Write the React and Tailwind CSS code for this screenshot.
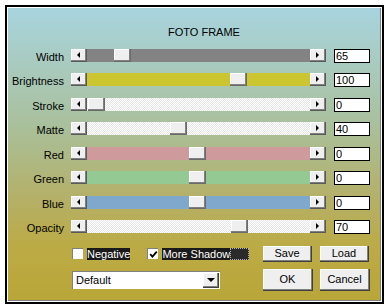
import React from 'react';

const DITHER = 'bg-[repeating-conic-gradient(#ffffff_0_25%,#e6e6e6_0_50%)] bg-[length:2px_2px]';

const rows = [
    { label: 'Width', value: '65', track: 'bg-[#838383]', pos: 27 },
    { label: 'Brightness', value: '100', track: 'bg-[#cbc52f]', pos: 143 },
    { label: 'Stroke', value: '0', track: DITHER, pos: 1 },
    { label: 'Matte', value: '40', track: DITHER, pos: 83 },
    { label: 'Red', value: '0', track: 'bg-[#cf9a9c]', pos: 102 },
    { label: 'Green', value: '0', track: 'bg-[#94c994]', pos: 102 },
    { label: 'Blue', value: '0', track: 'bg-[#80a7cc]', pos: 102 },
    { label: 'Opacity', value: '70', track: DITHER, pos: 144 },
];

const bevel = 'bg-[#efefef] shadow-[inset_-1px_-1px_0_#808080,inset_1px_1px_0_#ffffff]';

const ArrowButton = ({ dir }) => (
    <div className={`w-[16px] h-full flex items-center justify-center border-r border-b border-[#5a5a5a] ${bevel}`}>
        {dir === 'left' ? (
            <div className="w-0 h-0 border-y-[3px] border-y-transparent border-r-[3px] border-r-black" />
        ) : (
            <div className="w-0 h-0 border-y-[3px] border-y-transparent border-l-[3px] border-l-black" />
        )}
    </div>
);

const Slider = ({ track, pos }) => (
    <div className="ml-[7px] w-[255px] h-[13px] flex">
        <ArrowButton dir="left" />
        <div className={`flex-1 flex ${track}`}>
            <div style={{ marginLeft: pos }} className={`w-[17px] h-full border-r border-b border-[#6a6a6a] ${bevel}`} />
        </div>
        <ArrowButton dir="right" />
    </div>
);

const Button = ({ children, className }) => (
    <div className={`flex items-center justify-center border-r border-b border-[#404040] ${bevel} ${className}`}>
        {children}
    </div>
);

const App = () => {
    return (
        <div className="w-[386px] h-[306px] bg-white pt-[5px] pl-[5px] font-['Liberation_Sans',Arial,sans-serif] text-[11px] text-black">
            <div className="w-[379px] h-[299px] border-2 border-black flex">
                <div className="flex-1 flex border border-white">
                    <div className="flex-1 flex flex-col border-r border-b border-[#808080] bg-[linear-gradient(to_bottom,#a8d4df,#a9c09c_40%,#b4b068_65%,#bcab45_82%,#b9a638)] pt-[18px]">
                        <div className="h-[13px] leading-[13px] pl-[160px]">FOTO FRAME</div>

                        <div className="mt-[10px] flex flex-col gap-[10.43px]">
                            {rows.map((r) => (
                                <div key={r.label} className="flex items-start h-[14px]">
                                    <div className="w-[56px] text-right leading-[14px] pt-[1px]">{r.label}</div>
                                    <Slider track={r.track} pos={r.pos} />
                                    <div className="ml-[8px] w-[36px] h-[14px] border border-black bg-white pl-[1px] leading-[12px]">
                                        {r.value}
                                    </div>
                                </div>
                            ))}
                        </div>

                        <div className="mt-[12px] pl-[64px] flex flex-col">
                            <div className="flex items-center h-[16px]">
                                <div className="w-[191px] flex items-center">
                                    <div className="w-[11px] h-[11px] bg-white border-t border-l border-[#808080]" />
                                    <span className="ml-[4px] bg-[#1a1a1a] text-white leading-[12px]">Negative</span>
                                    <div className="ml-[17px] w-[11px] h-[11px] bg-white border-t border-l border-[#808080] flex items-center justify-center">
                                        <svg width="9" height="9" viewBox="0 0 9 9">
                                            <path d="M1.2 4.2 L3.4 6.6 L7.8 1.6" fill="none" stroke="black" strokeWidth="1.8" />
                                        </svg>
                                    </div>
                                    <span className="ml-[4px] bg-[#1a1a1a] text-white leading-[12px]">More Shadow</span>
                                    <span className="w-[19px] h-[12px] bg-[#2a2a2a] border border-dotted border-[#b0b0b0]" />
                                </div>
                                <Button className="w-[49px] h-[16px]">Save</Button>
                                <Button className="ml-[8px] w-[49px] h-[16px]">Load</Button>
                            </div>

                            <div className="mt-[7px] flex items-center h-[22px]">
                                <div className="w-[191px] flex items-center">
                                    <div className="w-[148px] h-[18px] flex bg-white border-t border-l border-[#808080]">
                                        <div className="flex-1 pl-[3px] leading-[16px]">Default</div>
                                        <div className={`w-[16px] h-[15px] mt-[1px] mr-[1px] flex items-center justify-center border-r border-b border-[#404040] ${bevel}`}>
                                            <div className="w-0 h-0 border-x-[4px] border-x-transparent border-t-[4px] border-t-black" />
                                        </div>
                                    </div>
                                </div>
                                <Button className="w-[50px] h-[22px]">OK</Button>
                                <Button className="ml-[7px] w-[50px] h-[22px]">Cancel</Button>
                            </div>
                        </div>
                    </div>
                </div>
            </div>
        </div>
    );
};

export default App;
